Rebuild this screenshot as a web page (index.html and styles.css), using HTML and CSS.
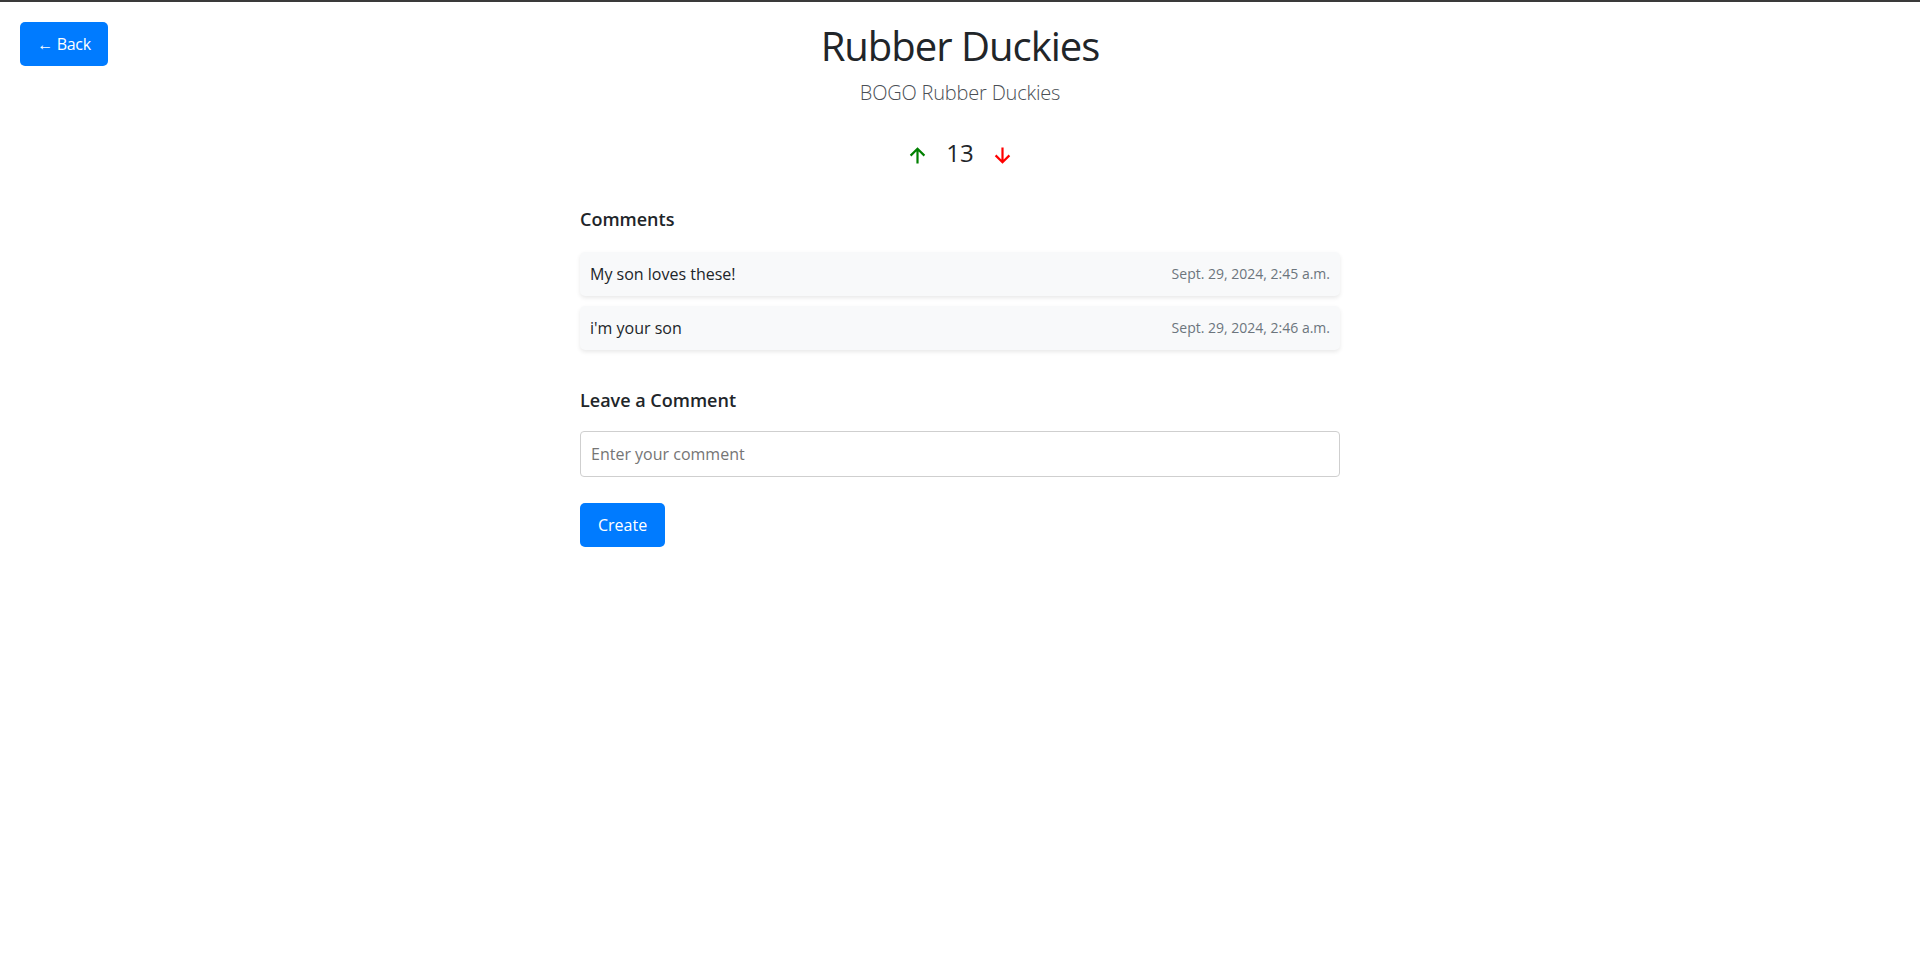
FILE: index.html
```html
<!DOCTYPE html>
<html lang="en">
<head>
<meta charset="utf-8">
<title>Rubber Duckies</title>
<link rel="stylesheet" href="styles.css">
</head>
<body>
<div class="page">
  <header class="top">
    <div class="top-left"><a class="btn btn-back" href="#">&larr; Back</a></div>
    <div class="top-center">
      <h1 class="title">Rubber Duckies</h1>
      <p class="lead">BOGO Rubber Duckies</p>
    </div>
    <div class="top-right"></div>
  </header>

  <div class="votes">
    <button class="vote up" aria-label="Upvote">
      <svg width="17" height="17" viewBox="0 0 17 17"><path d="M8.5 16.5V1.8M1.6 8.6L8.5 1.7 15.4 8.6" fill="none" stroke="#008000" stroke-width="2.2"/></svg>
    </button>
    <span class="count">13</span>
    <button class="vote down" aria-label="Downvote">
      <svg width="17" height="17" viewBox="0 0 17 17"><path d="M8.5 0.5V15.2M1.6 8.4L8.5 15.3 15.4 8.4" fill="none" stroke="#ff0000" stroke-width="2.2"/></svg>
    </button>
  </div>

  <main class="content">
    <h5 class="section-title">Comments</h5>
    <ul class="comments">
      <li class="comment"><span class="comment-text">My son loves these!</span><small class="comment-date">Sept. 29, 2024, 2:45 a.m.</small></li>
      <li class="comment"><span class="comment-text">i'm your son</span><small class="comment-date">Sept. 29, 2024, 2:46 a.m.</small></li>
    </ul>

    <h5 class="section-title leave">Leave a Comment</h5>
    <form class="comment-form">
      <input class="field" type="text" placeholder="Enter your comment">
      <button class="btn" type="button">Create</button>
    </form>
  </main>
</div>
</body>
</html>
```

FILE: styles.css
```css
* { box-sizing: border-box; }

html, body {
  margin: 0;
  padding: 0;
  background: #fff;
}

body {
  border-top: 2px solid #3a3a3a;
  font-family: "Open Sans", "Noto Sans", sans-serif;
  font-size: 16px;
  line-height: 1.5;
  color: #212529;
}

.page {
  padding: 20px 20px 0;
}

.top {
  display: grid;
  grid-template-columns: 1fr auto 1fr;
  align-items: start;
}

.top-center {
  text-align: center;
}

.title {
  margin: 0 0 8px;
  font-size: 40px;
  font-weight: 400;
  line-height: 1.2;
  letter-spacing: -1px;
}

.lead {
  margin: 0;
  font-size: 20px;
  font-weight: 300;
  line-height: 30px;
  color: #4a4f55;
  letter-spacing: -0.2px;
}

.btn {
  display: inline-block;
  height: 44px;
  padding: 10px 20px;
  border: 0;
  border-radius: 5px;
  background: #007bff;
  color: #fff;
  font-family: inherit;
  font-size: 16px;
  line-height: 24px;
  text-decoration: none;
  cursor: pointer;
}

.btn-back {
  width: 88px;
  padding: 10px 0;
  text-align: center;
  letter-spacing: -0.3px;
}

.votes {
  display: flex;
  justify-content: center;
  align-items: center;
  gap: 20px;
  margin-top: 27px;
  height: 36px;
}

.vote {
  display: flex;
  padding: 0;
  border: 0;
  background: none;
  cursor: pointer;
  margin-top: 4px;
}

.count {
  font-size: 24px;
  line-height: 36px;
}

.content {
  width: 760px;
  margin: 38px auto 0;
}

.section-title {
  margin: 0 0 21px;
  font-size: 18px;
  font-weight: 600;
  line-height: 1.2;
}

.section-title.leave {
  margin-top: 40px;
  margin-bottom: 20px;
}

.comments {
  list-style: none;
  margin: 0;
  padding: 0;
}

.comment {
  display: flex;
  justify-content: space-between;
  align-items: center;
  height: 44px;
  padding: 10px;
  margin-bottom: 10px;
  background: #f8f9fa;
  border-radius: 5px;
  box-shadow: 0 2px 4px rgba(0, 0, 0, 0.09);
}

.comment:last-child { margin-bottom: 0; }

.comment-date {
  font-size: 14px;
  color: #6c757d;
}

.comment-form {
  display: flex;
  flex-direction: column;
  align-items: flex-start;
  gap: 26px;
}

.field {
  width: 100%;
  height: 46px;
  padding: 10px;
  border: 1px solid #cfcfcf;
  border-radius: 4px;
  font-family: inherit;
  font-size: 16px;
  line-height: 24px;
  color: #212529;
}

.field::placeholder {
  color: #757575;
}

.comment-form .btn {
  padding: 10px 18px;
}
```
